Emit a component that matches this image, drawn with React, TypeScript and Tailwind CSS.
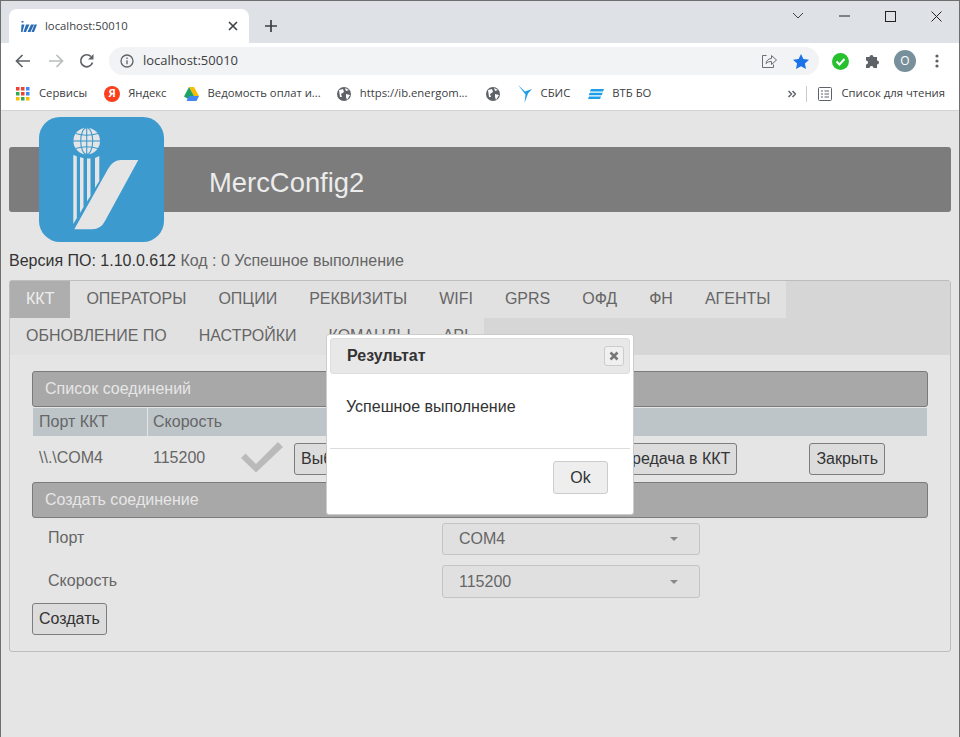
import React from "react";

const ui = "font-['Open_Sans','Noto_Sans',sans-serif]";

function Logo() {
  return (
    <svg width="125" height="125" viewBox="0 0 125 125" className="absolute left-[30px] top-[-30px]">
      <rect width="125" height="125" rx="21" fill="#3c9ace" />
      <circle cx="47.7" cy="24" r="13.3" fill="#e5e5e5" />
      <g fill="none" stroke="#3c9ace" strokeWidth="1.1">
        <ellipse cx="47.7" cy="24" rx="6" ry="13.3" />
        <line x1="47.7" y1="10" x2="47.7" y2="38" />
        <line x1="34" y1="24" x2="61" y2="24" />
        <path d="M36.500 16.500Q47.700 20 59 16.500" />
        <path d="M36.500 31.500Q47.700 28 59 31.500" />
      </g>
      <g fill="#e5e5e5">
        <path d="M34.300 38L37.800 39.200V101L34.300 107Z" />
        <path d="M41 40.200L44.500 41V90L41 96Z" />
        <path d="M48 41.500H51.500V79L48 84.500Z" />
        <path d="M56 41L60.300 39V64L56 71Z" />
        <path d="M99.300 43L82 43Q74 43 69 52L35.300 112.300L53 112.300Q62 112 66 104Z" />
      </g>
    </svg>
  );
}

function Btn({ children, className = "" }: { children: React.ReactNode; className?: string }) {
  return (
    <button className={"h-8 rounded-[3px] border border-[#7d7d7d] bg-[#dcdcdc] px-[6px] text-base text-[#333] " + className}>
      {children}
    </button>
  );
}

function SectionTitle({ children }: { children: React.ReactNode }) {
  return (
    <div className="flex h-9 items-center rounded-[3px] border border-[#7b7b7b] bg-[#a8a8a8] pl-3 text-base text-[#e6e6e6]">
      {children}
    </div>
  );
}

function Select({ value, className = "" }: { value: string; className?: string }) {
  return (
    <div className={"flex w-[258px] items-center justify-between rounded-[3px] border border-[#c4c4c4] bg-[#e0e0e0] pl-4 pr-[21px] text-base text-[#666] " + className}>
      <span>{value}</span>
      <span className="h-0 w-0 border-x-[4px] border-t-[4px] border-x-transparent border-t-[#888]" />
    </div>
  );
}

function Tab({ label, active }: { label: string; active?: boolean }) {
  return (
    <div className={"flex h-[37px] items-center px-4 pb-[2px] text-base " + (active ? "bg-[#aeaeae] text-[#eee]" : "bg-[#e1e1e1] text-[#666]")}>
      {label}
    </div>
  );
}

function Bookmark({ icon, label, className = "" }: { icon: React.ReactNode; label?: string; className?: string }) {
  return (
    <div className={"flex items-center text-[11.3px] text-[#3c4043] whitespace-nowrap " + className}>
      {icon}
      {label && <span>{label}</span>}
    </div>
  );
}

const Globe = ({ className = "" }: { className?: string }) => (
  <svg width="14" height="14" viewBox="0 0 14 14" className={className}>
    <circle cx="7" cy="7" r="7" fill="#5f6368" />
    <path d="M2 3 L6 2 L7 5 L4 7 L5 10 L3 10Z M9 7 L13 8 L10 13 L9 10Z M8 1 L12 3 L9 4Z" fill="#fff" />
  </svg>
);

export default function App() {
  const top = ["ОПЕРАТОРЫ", "ОПЦИИ", "РЕКВИЗИТЫ", "WIFI", "GPRS", "ОФД", "ФН", "АГЕНТЫ"];
  const bottom = ["ОБНОВЛЕНИЕ ПО", "НАСТРОЙКИ", "КОМАНДЫ", "API"];
  return (
    <div className="relative flex h-[737px] w-[960px] flex-col overflow-hidden border-x border-[#6f6f6f] bg-[#e5e5e5] font-['Liberation_Sans',Arial,sans-serif]">
      {/* Tab strip */}
      <div className={"flex h-[43px] shrink-0 items-end border-t border-[#6f6f6f] bg-[#dee1e6] " + ui}>
        <div className="ml-2 flex h-[34px] w-[240px] items-center rounded-t-lg bg-white pl-3 pr-[11px]">
          <svg width="16" height="11" viewBox="0 0 16 11">
            <path d="M0.500 0h2v1.500h-2z M0.500 3.500h3L1.500 11H0z M5 3.500h3.500L5 11H2.500z M10 3.500h3L9.500 11H6.500z M13.500 3.500H16L13 11h-2.500z" fill="#2a6db5" />
          </svg>
          <span className="ml-[8px] text-[11.3px] text-[#3c4043]">localhost:50010</span>
          <svg width="10" height="10" viewBox="0 0 10 10" className="ml-auto" stroke="#3c4043" strokeWidth="1.6">
            <path d="M1 1l8 8M9 1l-8 8" />
          </svg>
        </div>
        <svg width="14" height="14" viewBox="0 0 14 14" className="mb-[10px] ml-[15px]" stroke="#3c4043" strokeWidth="1.7">
          <path d="M7 1v12M1 7h12" />
        </svg>
        <div className="mb-[13px] ml-auto flex h-[28px] items-center pr-[17px]">
          <svg width="12" height="8" viewBox="0 0 12 8" fill="none" stroke="#3c4043" className="mr-[35px]"><path d="M1 1l5 5 5-5" /></svg>
          <svg width="11" height="2" viewBox="0 0 11 2" className="mr-[35px]"><path d="M0 1h11" stroke="#222" /></svg>
          <svg width="11" height="11" viewBox="0 0 11 11" className="mr-[35px]"><rect x=".5" y=".5" width="10" height="10" fill="none" stroke="#222" /></svg>
          <svg width="11" height="11" viewBox="0 0 11 11"><path d="M.5.5l10 10M10.5.5l-10 10" stroke="#222" /></svg>
        </div>
      </div>

      {/* Toolbar */}
      <div className={"flex h-[36px] shrink-0 items-center bg-white " + ui}>
        <svg width="16" height="14" viewBox="0 0 16 14" className="ml-[14px]" fill="none" stroke="#5f6368" strokeWidth="1.7"><path d="M15 7H2M7.500 1L1.500 7l6 6" /></svg>
        <svg width="16" height="14" viewBox="0 0 16 14" className="ml-[17px]" fill="none" stroke="#babcbe" strokeWidth="1.7"><path d="M1 7h13M8.500 1l6 6-6 6" /></svg>
        <svg width="16" height="16" viewBox="0 0 16 16" className="ml-[15px]" fill="none" stroke="#5f6368" strokeWidth="1.7"><path d="M13.500 9.500A6 6 0 1 1 12 3.500" /><path d="M14.500 1v5.500h-5.500z" fill="#5f6368" stroke="none" /></svg>
        <div className="ml-[14px] flex h-[28px] w-[710px] items-center rounded-full bg-[#f1f3f4] pl-[11px]">
          <svg width="14" height="14" viewBox="0 0 14 14" fill="none" stroke="#5f6368" strokeWidth="1.3">
            <circle cx="7" cy="7" r="6" />
            <path d="M7 6.200v4M7 3.500v1.400" />
          </svg>
          <span className="ml-[9px] text-[13px] text-[#3c4043]">localhost:50010</span>
          <svg width="16" height="16" viewBox="0 0 16 16" className="ml-auto" fill="none" stroke="#6a6e72">
            <path d="M5.500 2.500H1.500v12h11v-3" />
            <path d="M5 10.500C5.500 7 8 5.500 10.500 5.500V2.500l5 4.500-5 4.500V8.500C8.500 8.500 6.500 9 5 10.500Z" />
          </svg>
          <svg width="16" height="15" viewBox="0 0 16 15" className="ml-[16px] mr-[10px]"><path d="M8 0l2.400 5.100 5.600.7-4.100 3.800 1.100 5.400L8 12.300 3 15l1.100-5.400L0 5.800l5.600-.7z" fill="#1a73e8" /></svg>
        </div>
        <svg width="17" height="17" viewBox="0 0 17 17" className="ml-[13px]">
          <circle cx="8.500" cy="8.500" r="8.500" fill="#27c12f" />
          <path d="M4.500 8.500l3 3 5-5.500" fill="none" stroke="#fff" strokeWidth="2" />
        </svg>
        <svg width="16" height="16" viewBox="0 0 16 16" className="ml-[16px]" fill="#5f6368">
          <path d="M1 4h3.500a2 2 0 0 1 4 0H12v3.500a2 2 0 0 1 0 4V15H8.500a2 2 0 0 0-4 0H1v-3.500a2 2 0 0 0 0-4z" />
        </svg>
        <div className="ml-[13px] flex h-[22px] w-[22px] items-center justify-center rounded-full bg-[#78909c] text-xs text-white">O</div>
        <svg width="4" height="14" viewBox="0 0 4 14" className="ml-[19px]" fill="#5f6368">
          <circle cx="2" cy="2" r="1.600" /><circle cx="2" cy="7" r="1.600" /><circle cx="2" cy="12" r="1.600" />
        </svg>
      </div>

      {/* Bookmarks */}
      <div className={"flex h-[32px] shrink-0 items-center border-b border-[#d3d3d3] bg-white pb-[2px] pl-[15px] pr-[14px] " + ui}>
        <Bookmark
          label="Сервисы"
          icon={
            <svg width="14" height="14" viewBox="0 0 14 14" className="mr-[9px]">
              {[0, 5, 10].map((y, r) =>
                [0, 5, 10].map((x, c) => (
                  <rect key={x + "-" + y} x={x} y={y} width="3.500" height="3.500"
                    fill={[["#ea4335", "#ea4335", "#4285f4"], ["#34a853", "#ea4335", "#4285f4"], ["#fbbc04", "#34a853", "#fbbc04"]][r][c]} />
                ))
              )}
            </svg>
          }
        />
        <Bookmark
          className="ml-[17px]"
          label="Яндекс"
          icon={
            <span className="mr-2 flex h-4 w-4 items-center justify-center rounded-full bg-[#fc3f1d] text-[11px] font-bold text-white">Я</span>
          }
        />
        <Bookmark
          className="ml-[17px]"
          label="Ведомость оплат и..."
          icon={
            <svg width="15" height="14" viewBox="0 0 15 14" className="mr-[9px]">
              <path d="M5 0h5l5 9h-5z" fill="#fbbc04" />
              <path d="M5 0l5 9-2.500 5L0 9.500z" fill="#1ea362" />
              <path d="M5 9h10l-2.500 5H2.500z" fill="#4285f4" />
            </svg>
          }
        />
        <Bookmark className="ml-[16px]" label="https://ib.energom..." icon={<Globe className="mr-[9px]" />} />
        <Bookmark className="ml-[18px]" icon={<Globe />} />
        <Bookmark
          className="ml-[18px]"
          label="СБИС"
          icon={<svg width="14" height="18" viewBox="0 0 14 18" className="mr-[9px]"><path d="M0 0l7 6.500 7-2.500-4 4.500-3.500 9.500 1-8.500z" fill="#1e9de8" /></svg>}
        />
        <Bookmark
          className="ml-[18px]"
          label="ВТБ БО"
          icon={<svg width="16" height="10" viewBox="0 0 16 10" fill="#1e9de8" className="mr-2"><path d="M3 0h13l-1 2.500H2z M1.700 3.700h13l-1 2.500H.7z M1 7.500h12l-1 2.500H0z" /></svg>}
        />
        <svg width="8" height="8" viewBox="0 0 8 8" className="ml-auto" fill="none" stroke="#5f6368" strokeWidth="1.500"><path d="M.5 1l3 3-3 3M4.500 1l3 3-3 3" /></svg>
        <div className="ml-[10px] h-4 w-px bg-[#c8cacc]" />
        <svg width="14" height="14" viewBox="0 0 14 14" className="ml-[11px]" fill="none" stroke="#5f6368">
          <rect x=".5" y=".5" width="13" height="13" rx="1" />
          <path d="M3 4h2M6.500 4H11M3 7h2M6.500 7H11M3 10h2M6.500 10H11" />
        </svg>
        <span className="ml-[9px] whitespace-nowrap text-[11.3px] text-[#3c4043]">Список для чтения</span>
      </div>

      {/* Page */}
      <div className="flex flex-1 flex-col px-2 pt-9">
        <div className="relative flex h-[65px] shrink-0 items-center rounded-[3px] bg-[#7c7c7c] pl-[200px] pt-[7px] text-[27.4px] text-[#ececec]">
          <Logo />
          MercConfig2
        </div>
        <div className="mt-[39px] h-[19px] text-base leading-[19px] text-[#666]">
          <span className="text-[#333]">Версия ПО: 1.10.0.612</span> Код : 0 Успешное выполнение
        </div>

        <div className="mt-[10px] h-[372px] rounded-[3px] border border-[#bdbdbd]">
          <div className="flex flex-col bg-[#d6d6d6]">
            <div className="flex">
              <Tab label="ККТ" active />
              {top.map((t) => <Tab key={t} label={t} />)}
            </div>
            <div className="flex">
              {bottom.map((t) => <Tab key={t} label={t} />)}
            </div>
          </div>
          <div className="px-[22px] pt-[16px]">
            <SectionTitle>Список соединений</SectionTitle>
            <div className="mx-[1px] mt-[1px] flex h-[28px] items-center bg-[#bdc5c9] text-base text-[#666]">
              <div className="flex h-full w-[115px] items-center border-r border-[#e5e5e5] pl-[6px]">Порт ККТ</div>
              <div className="pl-[5px]">Скорость</div>
            </div>
            <div className="flex h-[46px] items-start pt-[7px] text-base leading-[30px] text-[#666]">
              <span className="ml-[7px] w-[114px]">\\.\COM4</span>
              <span className="w-[88px]">115200</span>
              <svg width="42" height="32" viewBox="0 0 42 32" className="mr-[11px] mt-[-2px]">
                <path d="M0 17L4.500 12.500L15 23L37 1L42 6L15 31.500Z" fill="#bababa" />
              </svg>
              <Btn>Выбрать</Btn>
              <Btn className="ml-auto">Передача в ККТ</Btn>
              <Btn className="ml-[72px] mr-[43px]">Закрыть</Btn>
            </div>
            <SectionTitle>Создать соединение</SectionTitle>
            <div className="mt-[5px] flex h-[32px] items-start pl-4 text-base text-[#666]">
              <span className="w-[394px] pt-[3px]">Порт</span>
              <Select value="COM4" className="h-[32px]" />
            </div>
            <div className="mt-[10px] flex h-[33px] items-start pl-4 text-base text-[#666]">
              <span className="w-[394px] pt-[4px]">Скорость</span>
              <Select value="115200" className="h-[33px]" />
            </div>
            <Btn className="mt-[5px]">Создать</Btn>
          </div>
        </div>
      </div>

      {/* Dialog */}
      <div className="absolute left-[325px] top-[334px] flex h-[181px] w-[308px] flex-col rounded-[3px] border border-[#ccc] bg-white p-[3px]">
        <div className="flex h-[36px] items-center rounded-[3px] border border-[#ddd] bg-[#e8e8e8] pl-4 pr-[5px] text-base font-bold text-[#333]">
          Результат
          <div className="ml-auto flex h-5 w-5 items-center justify-center rounded-[3px] border border-[#ccc] bg-[#f0f0f0]">
            <svg width="10" height="10" viewBox="0 0 10 10" stroke="#777" strokeWidth="2.600"><path d="M1.500 1.500l7 7M8.500 1.500l-7 7" /></svg>
          </div>
        </div>
        <div className="h-[75px] border-b border-[#ddd] pl-4 pt-[23px] text-base leading-[19px] text-[#333]">Успешное выполнение</div>
        <div className="flex justify-end pr-[22px] pt-[12px]">
          <div className="flex h-[33px] w-[55px] items-center justify-center rounded-[3px] border border-[#ccc] bg-[#eee] text-base text-[#333]">Ok</div>
        </div>
      </div>
    </div>
  );
}
